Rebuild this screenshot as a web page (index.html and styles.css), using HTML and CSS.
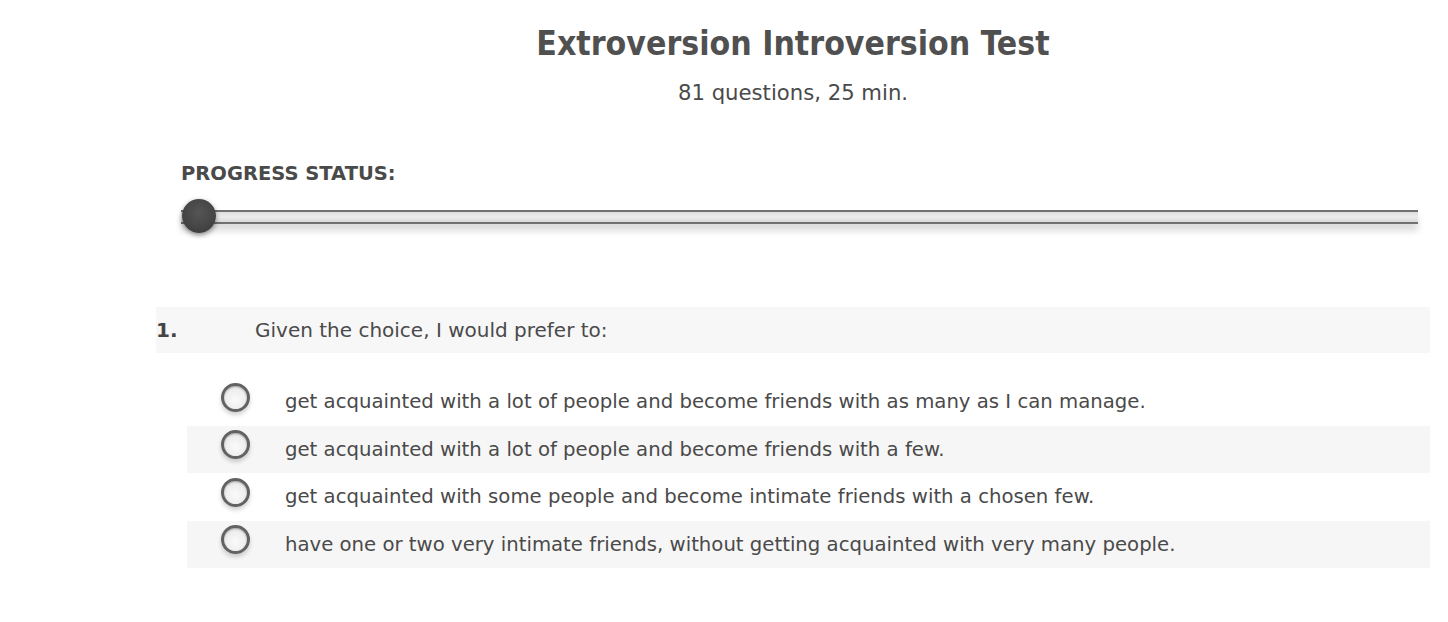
FILE: index.html
```html
<!DOCTYPE html>
<html>
<head>
<meta charset="utf-8">
<link rel="stylesheet" href="styles.css">
</head>
<body>
<div class="page">
  <header class="head">
    <h1 class="title">Extroversion Introversion Test</h1>
    <p class="sub">81 questions, 25 min.</p>
  </header>
  <section class="progress">
    <div class="progress-label">PROGRESS STATUS:</div>
    <div class="track">
      <span class="knob"></span>
    </div>
  </section>
  <section class="question">
    <div class="q-row">
      <span class="q-num">1.</span>
      <span class="q-text">Given the choice, I would prefer to:</span>
    </div>
    <ul class="options">
      <li class="opt"><span class="radio"></span><span class="opt-text">get acquainted with a lot of people and become friends with as many as I can manage.</span></li>
      <li class="opt alt"><span class="radio"></span><span class="opt-text">get acquainted with a lot of people and become friends with a few.</span></li>
      <li class="opt"><span class="radio"></span><span class="opt-text">get acquainted with some people and become intimate friends with a chosen few.</span></li>
      <li class="opt alt"><span class="radio"></span><span class="opt-text">have one or two very intimate friends, without getting acquainted with very many people.</span></li>
    </ul>
  </section>
</div>
</body>
</html>
```
FILE: styles.css
```css
html, body { margin: 0; padding: 0; background: #fff; }
body { font-family: "DejaVu Sans", sans-serif; color: #4a4a4a; }
.page { width: 1274px; margin-left: 156px; padding-top: 22px; }
.head { text-align: center; }
.title { margin: 0; font-family: "DejaVu Sans Condensed", "DejaVu Sans", sans-serif; font-size: 33.5px; font-weight: bold; color: #505050; line-height: 44px; }
.sub { margin: 12px 0 0; font-size: 21.2px; line-height: 30px; color: #4a4a4a; }
.progress { margin-top: 52px; padding-left: 25px; padding-right: 12px; }
.progress-label { font-size: 19.5px; font-weight: bold; color: #4a4a4a; line-height: 28px; }
.track { position: relative; margin-top: 22px; height: 10px; border-top: 2px solid #707070; border-bottom: 2px solid #707070;
  background: linear-gradient(#dedede, #ececec 50%, #d8d8d8); box-shadow: 0 7px 7px rgba(0,0,0,0.14); }
.knob { position: absolute; left: 1px; top: -13px; width: 34px; height: 34px; border-radius: 50%;
  background: radial-gradient(circle at 50% 40%, #555 0%, #444 60%, #363636 100%);
  box-shadow: 0 2px 5px rgba(0,0,0,0.45); }
.question { margin-top: 83px; }
.q-row { display: flex; align-items: center; height: 46px; background: #f7f7f7; font-size: 20px; }
.q-num { width: 99px; font-weight: bold; color: #444; }
.q-text { color: #4a4a4a; }
.options { list-style: none; margin: 25px 0 0 31px; padding: 0; }
.opt { display: flex; align-items: center; height: 47.5px; font-size: 19.7px; }
.opt.alt { background: #f6f6f6; }
.radio { box-sizing: border-box; width: 29px; height: 29px; margin-left: 34px; margin-right: 35px; margin-top: -9px; border-radius: 50%;
  border: 3px solid #626262; background: radial-gradient(circle at 50% 60%, #fafafa, #e4e4e4);
  box-shadow: 0 3px 4px rgba(0,0,0,0.18), inset 0 1px 2px rgba(0,0,0,0.3); }
.opt-text { color: #4a4a4a; }
```
